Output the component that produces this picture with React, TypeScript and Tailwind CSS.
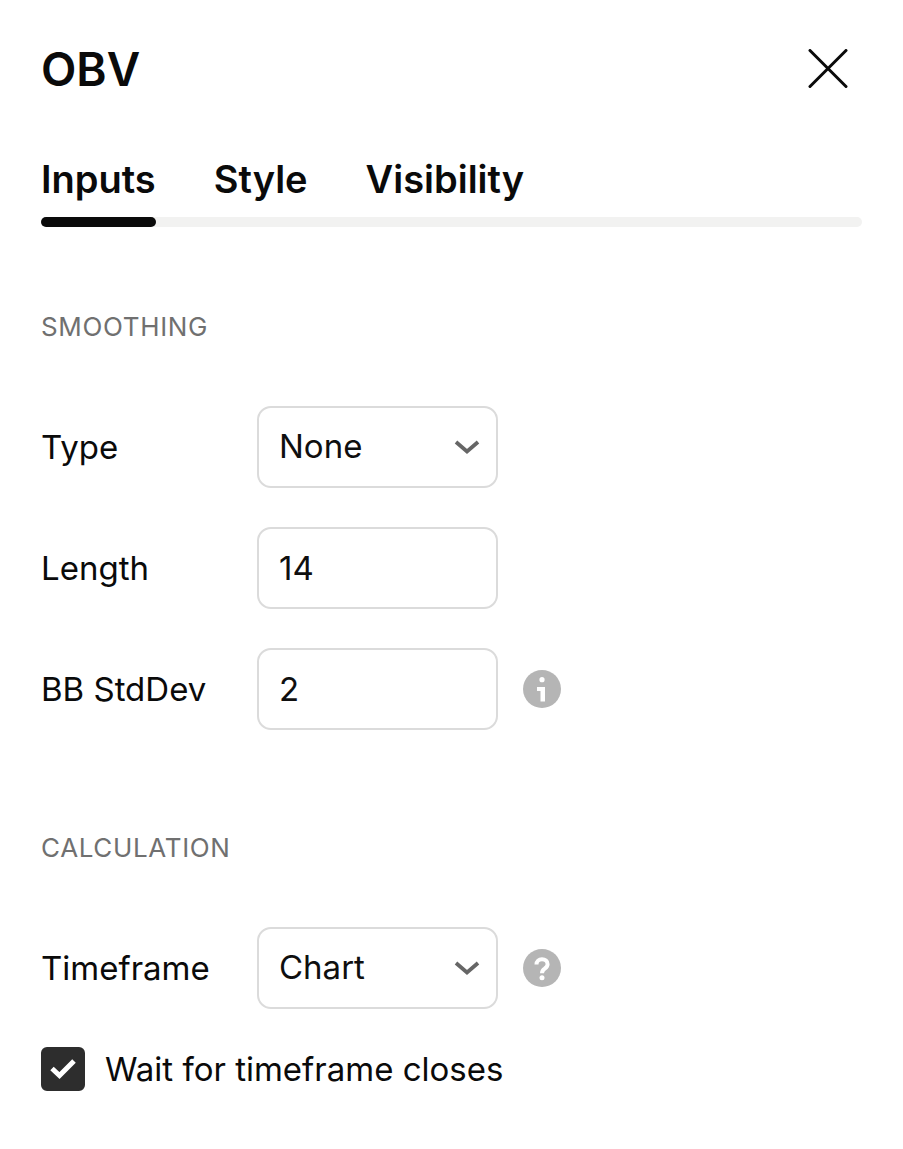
import { useState } from 'react';
import type { ReactNode } from 'react';

const tabs = ['Inputs', 'Style', 'Visibility'];

const fieldClass =
  'block h-[82px] w-full appearance-none rounded-[14px] border-2 border-[#dbdbdb] bg-white px-5 text-[33px] text-[#0f0f0f] outline-none focus:border-gray-400';

function SectionTitle({ children }: { children: ReactNode }) {
  return <h2 className="text-[26px] leading-8 tracking-wide text-[#707070] uppercase">{children}</h2>;
}

function Row({ id, label, hint, children }: { id: string; label: string; hint?: ReactNode; children: ReactNode }) {
  return (
    <div className="flex items-center">
      <label htmlFor={id} className="w-[216px] shrink-0 text-[33px] leading-11 whitespace-nowrap">
        {label}
      </label>
      <div className="relative w-[241px] shrink-0">{children}</div>
      {hint && <div className="ml-[25px] flex shrink-0">{hint}</div>}
    </div>
  );
}

function SelectField({ id, options }: { id: string; options: string[] }) {
  return (
    <>
      <select id={id} className={fieldClass}>
        {options.map((option) => (
          <option key={option}>{option}</option>
        ))}
      </select>
      <svg
        viewBox="0 0 26 16"
        className="pointer-events-none absolute top-1/2 right-[18px] h-4 w-[26px] -translate-y-1/2"
        fill="none"
        stroke="#666"
        strokeWidth="3.8"
        aria-hidden="true"
      >
        <path d="M2 3l11 9.500L24 3" />
      </svg>
    </>
  );
}

function InfoIcon() {
  return (
    <svg viewBox="0 0 38 38" className="size-[38px]" aria-hidden="true">
      <circle cx="19" cy="19" r="19" fill="#b5b5b5" />
      <circle cx="19" cy="9.700" r="2.600" fill="#fff" />
      <path d="M14 17h8v14.500h-4.500v-10.500H14z" fill="#fff" />
    </svg>
  );
}

function HelpIcon() {
  return (
    <svg viewBox="0 0 38 38" className="size-[38px]" aria-hidden="true">
      <circle cx="19" cy="19" r="19" fill="#b5b5b5" />
      <path
        d="M13.500 15.500c0-3.200 2.300-5.200 5.500-5.200s5.600 1.900 5.600 4.900c0 2.200-1.200 3.200-2.900 4.500-1.800 1.300-2.700 2-2.700 4.600"
        fill="none"
        stroke="#fff"
        strokeWidth="4"
      />
      <circle cx="19" cy="28.800" r="2.500" fill="#fff" />
    </svg>
  );
}

export default function App() {
  const [activeTab, setActiveTab] = useState('Inputs');
  const [length, setLength] = useState('14');
  const [stdDev, setStdDev] = useState('2');
  const [wait, setWait] = useState(true);

  return (
    <main className="min-h-screen bg-white px-[41px] pt-10 pb-14 font-['Inter',sans-serif] text-[#0a0a0a]">
      <header className="flex items-center justify-between">
        <h1 className="text-[46px] leading-[58px] font-semibold">OBV</h1>
        <button type="button" aria-label="Close" className="mr-[14px]">
          <svg
            viewBox="0 0 40 40"
            className="size-10"
            fill="none"
            stroke="#0a0a0a"
            strokeWidth="3"
            strokeLinecap="round"
            aria-hidden="true"
          >
            <path d="M2 1.500l36 36M38 1.500l-36 36" />
          </svg>
        </button>
      </header>

      <div role="tablist" className="mt-[57px] flex gap-[58px]">
        {tabs.map((tab) => (
          <button
            key={tab}
            type="button"
            role="tab"
            aria-selected={activeTab === tab}
            onClick={() => setActiveTab(tab)}
            className="relative pb-[14px] text-[38px] leading-12 font-semibold"
          >
            {tab}
            {activeTab === tab && (
              <span className="absolute top-full left-0 h-[10px] w-full rounded-full bg-[#0a0a0a]" />
            )}
          </button>
        ))}
      </div>
      <div className="h-[10px] rounded-full bg-[#f2f2f1]" />

      <section className="mt-[84px]">
        <SectionTitle>Smoothing</SectionTitle>
        <div className="mt-[63px] flex flex-col gap-[39px]">
          <Row id="type" label="Type">
            <SelectField id="type" options={['None', 'SMA', 'EMA']} />
          </Row>
          <Row id="length" label="Length">
            <input id="length" value={length} onChange={(e) => setLength(e.target.value)} className={fieldClass} />
          </Row>
          <Row id="stddev" label="BB StdDev" hint={<InfoIcon />}>
            <input id="stddev" value={stdDev} onChange={(e) => setStdDev(e.target.value)} className={fieldClass} />
          </Row>
        </div>
      </section>

      <section className="mt-[102px]">
        <SectionTitle>Calculation</SectionTitle>
        <div className="mt-[63px]">
          <Row id="timeframe" label="Timeframe" hint={<HelpIcon />}>
            <SelectField id="timeframe" options={['Chart', '1 day', '1 week']} />
          </Row>
        </div>
        <label className="mt-[38px] flex items-center gap-5 text-[33px] leading-11">
          <span className="relative flex size-11 shrink-0">
            <input
              type="checkbox"
              checked={wait}
              onChange={(e) => setWait(e.target.checked)}
              className="size-11 appearance-none rounded-md border-2 border-[#2d2d2d] checked:bg-[#2d2d2d]"
            />
            {wait && (
              <svg
                viewBox="0 0 44 44"
                className="pointer-events-none absolute inset-0 size-11"
                fill="none"
                stroke="#fff"
                strokeWidth="5"
                aria-hidden="true"
              >
                <path d="M11 21.500l7.500 7L33 14" />
              </svg>
            )}
          </span>
          Wait for timeframe closes
        </label>
      </section>
    </main>
  );
}
